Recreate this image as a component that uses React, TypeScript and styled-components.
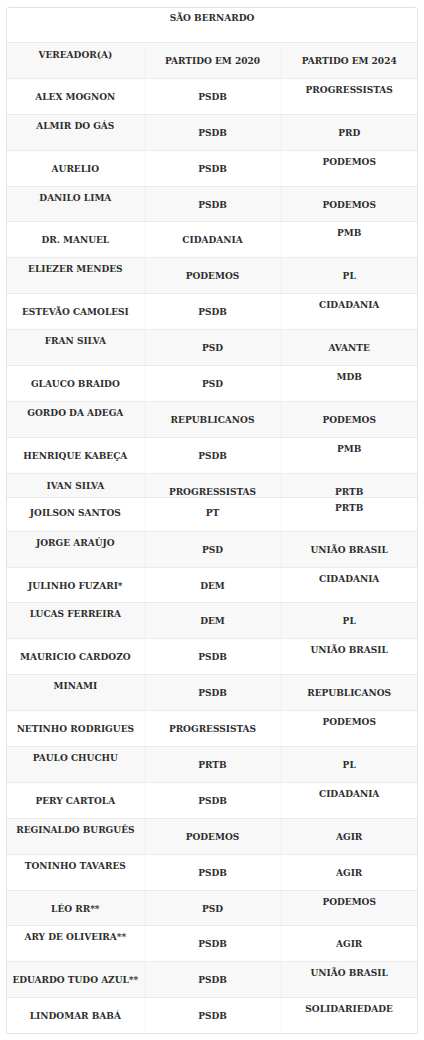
import React from "react";
import styled, { createGlobalStyle } from "styled-components";

const Global = createGlobalStyle`
  html, body { margin: 0; padding: 0; background: #ffffff; }
  body { font-family: "DejaVu Serif", "Liberation Serif", serif; }
`;

const Page = styled.div`
  padding: 7px 6px 0 6px;
  width: 412px;
`;

const Table = styled.div`
  border: 1px solid #e4e4e4;
  border-radius: 3px;
  box-shadow: 0 0 2px rgba(0, 0, 0, 0.06);
  overflow: hidden;
  background: #ffffff;
`;

type V = "top" | "mid";

const Row = styled.div<{ $h: number; $shade: boolean; $first?: boolean }>`
  display: grid;
  grid-template-columns: repeat(3, 1fr);
  box-sizing: border-box;
  height: ${(p) => p.$h}px;
  background: ${(p) => (p.$shade ? "#f8f8f8" : "#ffffff")};
  border-top: ${(p) => (p.$first ? "none" : "1px solid #ebebeb")};
`;

const Cell = styled.div<{ $pad: number; $divider: boolean }>`
  box-sizing: border-box;
  padding: ${(p) => p.$pad}px 4px 0 4px;
  text-align: center;
  font-family: "DejaVu Serif", "Liberation Serif", serif;
  font-stretch: condensed;
  font-weight: bold;
  font-size: 10px;
  line-height: 14px;
  color: #2e2e2e;
  white-space: nowrap;
  border-left: ${(p) => (p.$divider ? "1px solid rgba(0,0,0,0.018)" : "none")};
`;

type RowData = {
  cells: [string, V][];
  h?: number;
  topPad?: number;
  midPad?: number;
};

const H = 35.9;

const rows: RowData[] = [
  { cells: [["", "top"], ["SÃO BERNARDO", "top"], ["", "top"]], h: 34, topPad: 3 },
  { cells: [["VEREADOR(A)", "top"], ["PARTIDO EM 2020", "mid"], ["PARTIDO EM 2024", "mid"]], topPad: 5 },
  { cells: [["ALEX MOGNON", "mid"], ["PSDB", "mid"], ["PROGRESSISTAS", "top"]] },
  { cells: [["ALMIR DO GÁS", "top"], ["PSDB", "mid"], ["PRD", "mid"]] },
  { cells: [["AURELIO", "mid"], ["PSDB", "mid"], ["PODEMOS", "top"]] },
  { cells: [["DANILO LIMA", "top"], ["PSDB", "mid"], ["PODEMOS", "mid"]] },
  { cells: [["DR. MANUEL", "mid"], ["CIDADANIA", "mid"], ["PMB", "top"]] },
  { cells: [["ELIEZER MENDES", "top"], ["PODEMOS", "mid"], ["PL", "mid"]] },
  { cells: [["ESTEVÃO CAMOLESI", "mid"], ["PSDB", "mid"], ["CIDADANIA", "top"]] },
  { cells: [["FRAN SILVA", "top"], ["PSD", "mid"], ["AVANTE", "mid"]] },
  { cells: [["GLAUCO BRAIDO", "mid"], ["PSD", "mid"], ["MDB", "top"]] },
  { cells: [["GORDO DA ADEGA", "top"], ["REPUBLICANOS", "mid"], ["PODEMOS", "mid"]] },
  { cells: [["HENRIQUE KABEÇA", "mid"], ["PSDB", "mid"], ["PMB", "top"]] },
  { cells: [["IVAN SILVA", "top"], ["PROGRESSISTAS", "mid"], ["PRTB", "mid"]], h: 24, topPad: 5 },
  { cells: [["JOILSON SANTOS", "mid"], ["PT", "mid"], ["PRTB", "top"]], h: 34, topPad: 3, midPad: 8 },
  { cells: [["JORGE ARAÚJO", "top"], ["PSD", "mid"], ["UNIÃO BRASIL", "mid"]] },
  { cells: [["JULINHO FUZARI*", "mid"], ["DEM", "mid"], ["CIDADANIA", "top"]] },
  { cells: [["LUCAS FERREIRA", "top"], ["DEM", "mid"], ["PL", "mid"]] },
  { cells: [["MAURICIO CARDOZO", "mid"], ["PSDB", "mid"], ["UNIÃO BRASIL", "top"]] },
  { cells: [["MINAMI", "top"], ["PSDB", "mid"], ["REPUBLICANOS", "mid"]] },
  { cells: [["NETINHO RODRIGUES", "mid"], ["PROGRESSISTAS", "mid"], ["PODEMOS", "top"]] },
  { cells: [["PAULO CHUCHU", "top"], ["PRTB", "mid"], ["PL", "mid"]] },
  { cells: [["PERY CARTOLA", "mid"], ["PSDB", "mid"], ["CIDADANIA", "top"]] },
  { cells: [["REGINALDO BURGUÊS", "top"], ["PODEMOS", "mid"], ["AGIR", "mid"]] },
  { cells: [["TONINHO TAVARES", "top"], ["PSDB", "mid"], ["AGIR", "mid"]] },
  { cells: [["LÉO RR**", "mid"], ["PSD", "mid"], ["PODEMOS", "top"]] },
  { cells: [["ARY DE OLIVEIRA**", "top"], ["PSDB", "mid"], ["AGIR", "mid"]] },
  { cells: [["EDUARDO TUDO AZUL**", "mid"], ["PSDB", "mid"], ["UNIÃO BRASIL", "top"]] },
  { cells: [["LINDOMAR BABÁ", "mid"], ["PSDB", "mid"], ["SOLIDARIEDADE", "top"]] },
];

export default function App() {
  return (
    <>
      <Global />
      <Page>
        <Table>
          {rows.map((r, i) => (
            <Row key={i} $h={r.h ?? H} $shade={i % 2 === 1} $first={i === 0}>
              {r.cells.map(([text, v], j) => (
                <Cell
                  key={j}
                  $divider={j > 0 && i > 0}
                  $pad={v === "top" ? r.topPad ?? 4 : r.midPad ?? 11}
                >
                  {text}
                </Cell>
              ))}
            </Row>
          ))}
        </Table>
      </Page>
    </>
  );
}
